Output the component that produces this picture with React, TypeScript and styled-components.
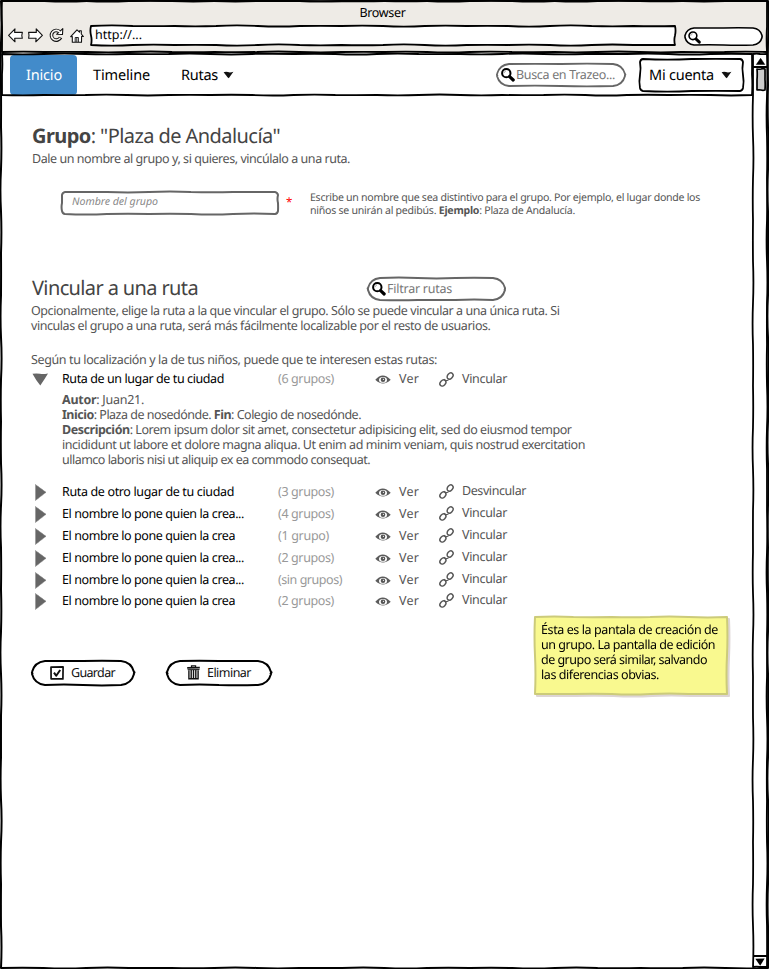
import React, { ReactNode, useLayoutEffect, useRef, useState } from 'react';
import styled, { createGlobalStyle } from 'styled-components';

const GlobalStyle = createGlobalStyle`
  * { box-sizing: border-box; }
  html, body { margin: 0; padding: 0; background: #fff; }
  body {
    font-family: "Noto Sans", "Open Sans", sans-serif;
    text-rendering: geometricPrecision;
    overflow: hidden;
  }
`;

/* ---------- Hand-drawn outlines ---------- */

type Pt = [number, number];

function wavy([x1, y1]: Pt, [x2, y2]: Pt, amp: number, seed: number): string {
  const len = Math.hypot(x2 - x1, y2 - y1);
  const n = Math.max(2, Math.round(len / 42));
  const nx = -(y2 - y1) / (len || 1);
  const ny = (x2 - x1) / (len || 1);
  let d = '';
  for (let i = 0; i < n; i++) {
    const t = (k: number) => (i + k) / n;
    const off = amp * Math.sin((i + 1) * 2.3 + seed);
    const mx = x1 + (x2 - x1) * t(0.5) + nx * off * 1.3;
    const my = y1 + (y2 - y1) * t(0.5) + ny * off * 1.3;
    d += `Q${mx.toFixed(2)} ${my.toFixed(2)} ${(x1 + (x2 - x1) * t(1)).toFixed(2)} ${(y1 + (y2 - y1) * t(1)).toFixed(2)}`;
  }
  return d;
}

function outline(w: number, h: number, r: number, amp: number, seed: number): string {
  const a = 1;
  const R = w - 1;
  const B = h - 1;
  const ry = Math.min(r, (h - 2) / 2 - 1);
  return (
    `M${a + r} ${a}` + wavy([a + r, a], [R - r, a], amp, seed) +
    `Q${R - r * 0.2} ${a + ry * 0.1} ${R} ${a + ry}` + wavy([R, a + ry], [R, B - ry], amp, seed + 1) +
    `Q${R - r * 0.2} ${B - ry * 0.1} ${R - r} ${B}` + wavy([R - r, B], [a + r, B], amp, seed + 2) +
    `Q${a + r * 0.2} ${B - ry * 0.1} ${a} ${B - ry}` + wavy([a, B - ry], [a, a + ry], amp, seed + 4) +
    `Q${a + r * 0.2} ${a + ry * 0.1} ${a + r} ${a}Z`
  );
}

const OutlineSvg = styled.svg`
  position: absolute;
  inset: 0;
  pointer-events: none;
  overflow: visible;
`;

interface SketchProps {
  w: number; h: number; r?: number; amp?: number; seed?: number;
  color?: string; fill?: string; line?: number;
}

const Sketch = ({ w, h, r = 0, amp = 1, seed = 0, color = '#000', fill = 'none', line = 1.8 }: SketchProps) => (
  <OutlineSvg width={w} height={h} aria-hidden>
    <path d={outline(w, h, r, amp, seed)} fill={fill} stroke={color} strokeWidth={line} strokeLinejoin="round" />
  </OutlineSvg>
);

/* ---------- Text tracked to a set measure ---------- */

const TextLine = styled.span<{ $size: number; $lh: number; $color: string; $italic?: boolean }>`
  display: block;
  position: relative;
  white-space: pre;
  font-size: ${p => p.$size}px;
  line-height: ${p => p.$lh}px;
  height: ${p => p.$lh}px;
  color: ${p => p.$color};
  font-style: ${p => (p.$italic ? 'italic' : 'normal')};
  b { font-weight: 700; }
`;
const Tracked = styled.span`
  display: inline-block;
  vertical-align: top;
`;

interface TProps {
  w: number; size?: number; lh?: number; color?: string; italic?: boolean; children: ReactNode;
}

const T = ({ w, size = 12.5, lh = 15, color = '#555', italic, children }: TProps) => {
  const ref = useRef<HTMLSpanElement>(null);
  const [spacing, setSpacing] = useState(0);
  useLayoutEffect(() => {
    const el = ref.current;
    if (!el) return;
    el.style.letterSpacing = '0px';
    const natural = el.getBoundingClientRect().width;
    const value = (w - natural) / Math.max(1, (el.textContent || '').length);
    el.style.letterSpacing = `${value}px`;
    setSpacing(value);
  }, [w, size]);
  return (
    <TextLine $size={size} $lh={lh} $color={color} $italic={italic}>
      <Tracked ref={ref} style={{ letterSpacing: spacing }}>{children}</Tracked>
    </TextLine>
  );
};

/* ---------- Icons ---------- */

const Icon = styled.svg`
  display: block;
  flex: none;
  overflow: visible;
`;

const BackIcon = () => (
  <Icon width="15" height="15" viewBox="0 0 15 15" fill="#fff" stroke="#111" strokeWidth="1.1" strokeLinejoin="round">
    <path d="M.6 7.4 7 .9 6.6 4.4 14.4 4.2 13.8 7.5 14.3 10.3 6.7 10.2 7 13.8Z" />
  </Icon>
);
const ForwardIcon = () => (
  <Icon width="15" height="15" viewBox="0 0 15 15" fill="#fff" stroke="#111" strokeWidth="1.1" strokeLinejoin="round">
    <path d="M14.4 7.3 8.2.9 8.3 4.4.6 4.3 1 7.4.6 10.3 8.1 10.3 7.8 13.8Z" />
  </Icon>
);
const ReloadIcon = () => (
  <Icon width="15" height="15" viewBox="0 0 15 15" fill="none">
    <path d="M10.6 3.9A4.8 4.8 0 1 0 11.6 9.4" stroke="#111" strokeWidth="3.6" />
    <path d="M13.8.7 13.5 6.5 7.6 6.3Z" fill="#fff" stroke="#111" strokeWidth="1.1" strokeLinejoin="round" />
    <path d="M11 4.2A4.8 4.8 0 1 0 11.2 9.9" stroke="#f6f4f1" strokeWidth="1.6" />
  </Icon>
);
const HomeIcon = () => (
  <Icon width="14" height="14" viewBox="0 0 14 14" fill="#fff" stroke="#111" strokeWidth="1.1" strokeLinejoin="round">
    <path d="M.7 7.7 7 .9 9.5 3.2V1.8H11.3V5L13.4 7.5 11.6 7.3 11.5 13.3H2.3V7.5Z" />
    <path d="M5.2 13V8.5H8.4V13M6.8 8.6V13" fill="none" strokeWidth=".9" />
  </Icon>
);
const SearchIcon = ({ size = 14, thin = false }: { size?: number; thin?: boolean }) => (
  <Icon width={size} height={size} viewBox="0 0 14 14" fill="none" stroke="#000" strokeLinecap="round">
    <ellipse cx="5.3" cy="5.2" rx="4.2" ry="4.1" strokeWidth={thin ? 1.7 : 2} />
    <path d="M8.6 8.6 12.2 12" strokeWidth="3.2" />
    <path d="M3 4.8Q3.3 3.4 4.7 3" stroke="#777" strokeWidth=".6" />
  </Icon>
);
const Caret = () => (
  <Icon width="11" height="8" viewBox="0 0 11 8">
    <path d="M.6 1.2Q3 .2 5 1.1T10.4.8Q8.3 3.7 5.8 7.2 4.4 6.6 3.4 4.7Z" fill="#111" />
  </Icon>
);
const UpArrow = () => (
  <Icon width="9" height="7" viewBox="0 0 9 7"><path d="M.3 6.6 4.6.3 8.8 6.5Z" stroke="#000" strokeWidth=".5" /></Icon>
);
const DownArrow = () => (
  <Icon width="10" height="8" viewBox="0 0 10 8"><path d="M.3.8 9.6.5 5.2 7.7Z" /></Icon>
);
const RightTriangle = () => (
  <Icon width="12" height="17" viewBox="0 0 12 17">
    <path d="M.4.5 11 8.3.4 16.5Z" fill="#666" />
    <path d="M.4.5 11 8.3.4 16.5" fill="none" stroke="#777" strokeWidth=".8" strokeDasharray="1 .7" />
  </Icon>
);
const DownTriangle = () => (
  <Icon width="17" height="13" viewBox="0 0 17 13">
    <path d="M.5.7Q5 .1 8 .8T16 .4Q13 5.5 8.3 12.5 3.8 7 .5.7Z" fill="#666" />
  </Icon>
);
const EyeIcon = () => (
  <Icon width="16" height="9" viewBox="0 0 16 9">
    <path d="M.3 4.8Q7.6-3.9 15.7 4.8 8 12.4.3 4.8Z" fill="#5c5c5c" />
    <ellipse cx="8" cy="4.9" rx="4" ry="2.9" fill="#fff" />
    <circle cx="8" cy="4.7" r="2.3" fill="#555" />
    <circle cx="8.4" cy="4.3" r=".6" fill="#fff" />
  </Icon>
);
const LinkIcon = () => (
  <Icon width="15" height="15" viewBox="0 0 15 15" fill="none" stroke="#555" strokeWidth="1.4" strokeLinecap="round">
    <ellipse cx="3.9" cy="11" rx="3.5" ry="2.5" transform="rotate(-48 3.9 11)" />
    <ellipse cx="11.1" cy="4" rx="3.5" ry="2.5" transform="rotate(-48 11.1 4)" />
    <path d="M5.6 7.4Q6.6 9.4 9.2 8" strokeWidth="1.1" />
  </Icon>
);
const CheckIcon = () => (
  <Icon width="14" height="14" viewBox="0 0 14 14" fill="none" stroke="#111" strokeLinejoin="round">
    <path d="M1 1.2 13.1.9 12.9 12.9 1.1 12.8Z" strokeWidth="1.7" />
    <path d="M4 6.6 6.2 9.8 10.2 4" strokeWidth="2" />
  </Icon>
);
const TrashIcon = () => (
  <Icon width="13" height="15" viewBox="0 0 13 15" fill="none" stroke="#111">
    <path d="M4.5 2.2V.8H8.6V2.2" strokeWidth="1.2" />
    <path d="M.2 2.8 12.8 2.7" strokeWidth="1.7" />
    <path d="M.6 4.7 12.5 4.6" strokeWidth="1" />
    <path d="M1.9 5.2V13.8H11.1V5.2M4.2 5V13M6.5 5V13M8.8 5V13" strokeWidth="1.4" />
  </Icon>
);

/* ---------- Browser window ---------- */

const Window = styled.div`
  position: relative;
  width: 769px;
  height: 969px;
  padding-left: 1px;
  background: #fff;
  overflow: hidden;
`;
const Chrome = styled.header`
  position: relative;
  height: 53px;
  padding: 5px 6px 0 7px;
  background: #eeebe6;
`;
const WindowTitle = styled.div`
  display: flex;
  justify-content: center;
  margin-right: 6px;
  height: 20px;
`;
const Toolbar = styled.div`
  display: flex;
  align-items: center;
  height: 21px;
`;
const ToolIcon = styled.span<{ $w: number }>`
  width: ${p => p.$w}px;
  flex: none;
`;
const UrlField = styled.div`
  position: relative;
  width: 586px;
  height: 21px;
  padding: 2px 5px;
`;
const Over = styled.div`
  position: relative;
  display: flex;
  align-items: center;
`;
const ChromeSearch = styled.div`
  position: relative;
  width: 79px;
  height: 19px;
  margin: 1px 0 0 9px;
  padding: 4px;
`;
const Body = styled.div`
  display: flex;
  height: 916px;
`;
const Page = styled.div`
  width: 751px;
`;
const ScrollTrack = styled.div`
  position: relative;
  width: 16px;
  display: flex;
  flex-direction: column;
  align-items: center;
  justify-content: space-between;
  padding: 3px 0 2px;
`;
const ScrollEnd = styled.div<{ $edge: 'top' | 'bottom' }>`
  display: flex;
  justify-content: center;
  align-items: center;
  width: 14px;
  height: 12px;
  border-${p => (p.$edge === 'top' ? 'bottom' : 'top')}: 2px solid #000;
`;
const Thumb = styled.div`
  position: relative;
  width: 10px;
  height: 23px;
  margin: 0 0 auto 1px;
`;

/* ---------- Navigation ---------- */

const NavBar = styled.nav`
  position: relative;
  display: flex;
  height: 43px;
  padding: 2px 0 0 9px;
`;
const NavItem = styled.div<{ $w: number; $active?: boolean }>`
  display: flex;
  gap: 5px;
  width: ${p => p.$w}px;
  height: 40px;
  padding: 10px 0 0 16px;
  border-radius: 4px;
  background: ${p => (p.$active ? '#428bca' : 'transparent')};
  svg { margin-top: 6px; }
`;
const SearchBox = styled.div<{ $w: number }>`
  position: relative;
  width: ${p => p.$w}px;
  height: 24px;
  padding: 4px 5px;
  ${Over} { gap: 1px; }
`;
const NavSearchSlot = styled.div`
  margin: 8px 13px 0 auto;
`;
const AccountButton = styled.div`
  position: relative;
  width: 105px;
  height: 34px;
  margin: 3px 8px 0 0;
  padding: 7px 10px;
  ${Over} { gap: 7px; }
`;

/* ---------- Content ---------- */

const Content = styled.main`
  padding: 28px 0 0 30px;
`;
const Heading = styled.div`
  padding-left: 1px;
`;
const Intro = styled.div`
  padding: 3px 0 0 1px;
`;
const NameRow = styled.div`
  display: flex;
  margin-top: 25px;
  padding-left: 30px;
  height: 26px;
`;
const NameField = styled.div`
  position: relative;
  width: 218px;
  height: 24px;
  padding: 4px 11px;
`;
const Required = styled.span`
  width: 31px;
  padding: 4px 0 0 7px;
  font-size: 11.5px;
  line-height: 15px;
  color: #f00;
`;
const Help = styled.div`
  padding-top: 1px;
`;
const LinkHeader = styled.div`
  display: flex;
  margin-top: 59px;
  height: 27px;
  padding-left: 1px;
  ${SearchBox} { margin: 1px 0 0 169px; }
`;
const Paragraph = styled.div<{ $top?: number }>`
  padding-top: ${p => p.$top || 0}px;
`;
const RouteRow = styled.div<{ $h: number }>`
  display: grid;
  grid-template-columns: 31px 216px 97px 24px 40px 23px auto;
  height: ${p => p.$h}px;
`;
const Cell = styled.div<{ $top?: number; $left?: number }>`
  margin-top: ${p => p.$top || 0}px;
  margin-left: ${p => p.$left || 0}px;
`;
const RouteDetails = styled.div`
  padding: 6px 0 17px 31px;
`;
const Routes = styled.div`
  padding-top: 4px;
`;
const Footer = styled.div`
  display: flex;
  margin-top: 8px;
`;
const ActionButton = styled.div<{ $w: number; $gap: number }>`
  position: relative;
  width: ${p => p.$w}px;
  height: 26px;
  margin: 44px ${p => p.$gap}px 0 0;
  padding: 5px 0 0 19px;
  ${Over} { gap: 7px; }
`;
const Note = styled.aside`
  position: relative;
  width: 194px;
  height: 79px;
  padding: 6px 7px;
  filter: drop-shadow(2px 2px 0.5px #ddd5d5);
`;

interface Route { name: string; nameW: number; groups: string; groupsW: number; action?: string; h: number }

const routes: Route[] = [
  { name: 'Ruta de otro lugar de tu ciudad', nameW: 172, groups: '(3 grupos)', groupsW: 56, action: 'Desvincular', h: 22 },
  { name: 'El nombre lo pone quien la crea...', nameW: 182, groups: '(4 grupos)', groupsW: 56, h: 22 },
  { name: 'El nombre lo pone quien la crea', nameW: 173, groups: '(1 grupo)', groupsW: 51, h: 22 },
  { name: 'El nombre lo pone quien la crea...', nameW: 182, groups: '(2 grupos)', groupsW: 56, h: 22 },
  { name: 'El nombre lo pone quien la crea...', nameW: 182, groups: '(sin grupos)', groupsW: 64, h: 21 },
  { name: 'El nombre lo pone quien la crea', nameW: 173, groups: '(2 grupos)', groupsW: 56, h: 15 },
];

const RouteLine = ({ route, open }: { route: Route; open?: boolean }) => (
  <RouteRow $h={route.h}>
    <Cell $top={open ? 2 : 0} $left={open ? 1 : 4}>{open ? <DownTriangle /> : <RightTriangle />}</Cell>
    <Cell><T w={route.nameW} color="#000">{route.name}</T></Cell>
    <Cell><T w={route.groupsW} color="#999">{route.groups}</T></Cell>
    <Cell $top={4}><EyeIcon /></Cell>
    <Cell><T w={20}>Ver</T></Cell>
    <Cell $top={open ? 1 : 0}><LinkIcon /></Cell>
    <Cell $top={open ? 0 : -1}><T w={route.action ? 64 : 45}>{route.action || 'Vincular'}</T></Cell>
  </RouteRow>
);

const openRoute: Route = { name: 'Ruta de un lugar de tu ciudad', nameW: 162, groups: '(6 grupos)', groupsW: 56, h: 15 };

export default function App() {
  return (
    <>
      <GlobalStyle />
      <Window>
        <Chrome>
          <WindowTitle><T w={46} color="#000">Browser</T></WindowTitle>
          <Toolbar>
            <ToolIcon $w={20}><BackIcon /></ToolIcon>
            <ToolIcon $w={21}><ForwardIcon /></ToolIcon>
            <ToolIcon $w={21}><ReloadIcon /></ToolIcon>
            <ToolIcon $w={20}><HomeIcon /></ToolIcon>
            <UrlField>
              <Sketch w={586} h={21} fill="#fff" seed={2} amp={1} />
              <T w={47} color="#000">http://...</T>
            </UrlField>
            <ChromeSearch>
              <Sketch w={79} h={19} r={9} fill="#fff" seed={1} amp={0.5} line={1.6} />
              <Over><SearchIcon size={13} thin /></Over>
            </ChromeSearch>
          </Toolbar>
          <Sketch w={767} h={53} amp={0.8} seed={3} />
        </Chrome>
        <Body>
          <Page>
            <NavBar>
              <NavItem $w={67} $active><T w={36} size={14.5} lh={20} color="#fff">Inicio</T></NavItem>
              <NavItem $w={88}><T w={57} size={14.5} lh={20} color="#000">Timeline</T></NavItem>
              <NavItem $w={80}><T w={37} size={14.5} lh={20} color="#000">Rutas</T><Caret /></NavItem>
              <NavSearchSlot>
                <SearchBox $w={130}>
                  <Sketch w={130} h={24} r={12} color="#666" seed={1} amp={0.7} />
                  <Over><SearchIcon /><T w={99} color="#777">Busca en Trazeo...</T></Over>
                </SearchBox>
              </NavSearchSlot>
              <AccountButton>
                <Sketch w={105} h={34} r={3} seed={5} amp={1} />
                <Over><T w={65} size={14.5} lh={20} color="#000">Mi cuenta</T><Caret /></Over>
              </AccountButton>
              <Sketch w={752} h={43} amp={0.8} seed={0} />
            </NavBar>
            <Content>
              <Heading><T w={248} size={20} lh={24} color="#444"><b>Grupo</b>: "Plaza de Andalucía"</T></Heading>
              <Intro><T w={318}>Dale un nombre al grupo y, si quieres, vincúlalo a una ruta.</T></Intro>
              <NameRow>
                <NameField>
                  <Sketch w={218} h={24} r={3} color="#666" seed={4} amp={0.9} line={2} />
                  <T w={86} size={10.6} color="#888" italic>Nombre del grupo</T>
                </NameField>
                <Required>*</Required>
                <Help>
                  <T w={390} size={10.6} lh={13}>Escribe un nombre que sea distintivo para el grupo. Por ejemplo, el lugar donde los</T>
                  <T w={265} size={10.6} lh={13}>niños se unirán al pedibús. <b>Ejemplo</b>: Plaza de Andalucía.</T>
                </Help>
              </NameRow>
              <LinkHeader>
                <T w={166} size={20} lh={24} color="#444">Vincular a una ruta</T>
                <SearchBox $w={139}>
                  <Sketch w={139} h={24} r={12} color="#666" seed={3} amp={0.7} line={2} />
                  <Over><SearchIcon /><T w={65} color="#777">Filtrar rutas</T></Over>
                </SearchBox>
              </LinkHeader>
              <Paragraph>
                <T w={528.5}>Opcionalmente, elige la ruta a la que vincular el grupo. Sólo se puede vincular a una única ruta. Si</T>
                <T w={459.5}>vinculas el grupo a una ruta, será más fácilmente localizable por el resto de usuarios.</T>
              </Paragraph>
              <Paragraph $top={19}>
                <T w={406}>Según tu localización y la de tus niños, puede que te interesen estas rutas:</T>
              </Paragraph>
              <Routes>
                <RouteLine route={openRoute} open />
                <RouteDetails>
                  <T w={82}><b>Autor</b>: Juan21.</T>
                  <T w={299}><b>Inicio</b>: Plaza de nosedónde. <b>Fin</b>: Colegio de nosedónde.</T>
                  <T w={509.5}><b>Descripción</b>: Lorem ipsum dolor sit amet, consectetur adipisicing elit, sed do eiusmod tempor</T>
                  <T w={523}>incididunt ut labore et dolore magna aliqua. Ut enim ad minim veniam, quis nostrud exercitation</T>
                  <T w={308}>ullamco laboris nisi ut aliquip ex ea commodo consequat.</T>
                </RouteDetails>
                {routes.map((r, i) => <RouteLine key={i} route={r} />)}
              </Routes>
              <Footer>
                <ActionButton $w={104} $gap={31}>
                  <Sketch w={104} h={26} r={13} seed={1} amp={0.9} line={2} />
                  <Over><CheckIcon /><T w={44} color="#111">Guardar</T></Over>
                </ActionButton>
                <ActionButton $w={106} $gap={262}>
                  <Sketch w={106} h={26} r={13} seed={1.5} amp={0.9} line={2} />
                  <Over><Cell $left={2}><TrashIcon /></Cell><T w={44} color="#111">Eliminar</T></Over>
                </ActionButton>
                <Note>
                  <Sketch w={194} h={79} color="#cccb7a" fill="#f9f98f" seed={2} amp={0.8} line={2} />
                  <T w={177} color="#000">Ésta es la pantala de creación de</T>
                  <T w={174} color="#000">un grupo. La pantalla de edición</T>
                  <T w={166} color="#000">de grupo será similar, salvando</T>
                  <T w={118} color="#000">las diferencias obvias.</T>
                </Note>
              </Footer>
            </Content>
          </Page>
          <ScrollTrack>
            <Sketch w={16} h={915} amp={0.7} seed={2} />
            <ScrollEnd $edge="top"><UpArrow /></ScrollEnd>
            <Thumb><Sketch w={10} h={23} fill="#ccc" amp={0.5} line={1.7} /></Thumb>
            <ScrollEnd $edge="bottom"><DownArrow /></ScrollEnd>
          </ScrollTrack>
        </Body>
        <Sketch w={769} h={969} amp={0.9} seed={1} line={2} />
      </Window>
    </>
  );
}
